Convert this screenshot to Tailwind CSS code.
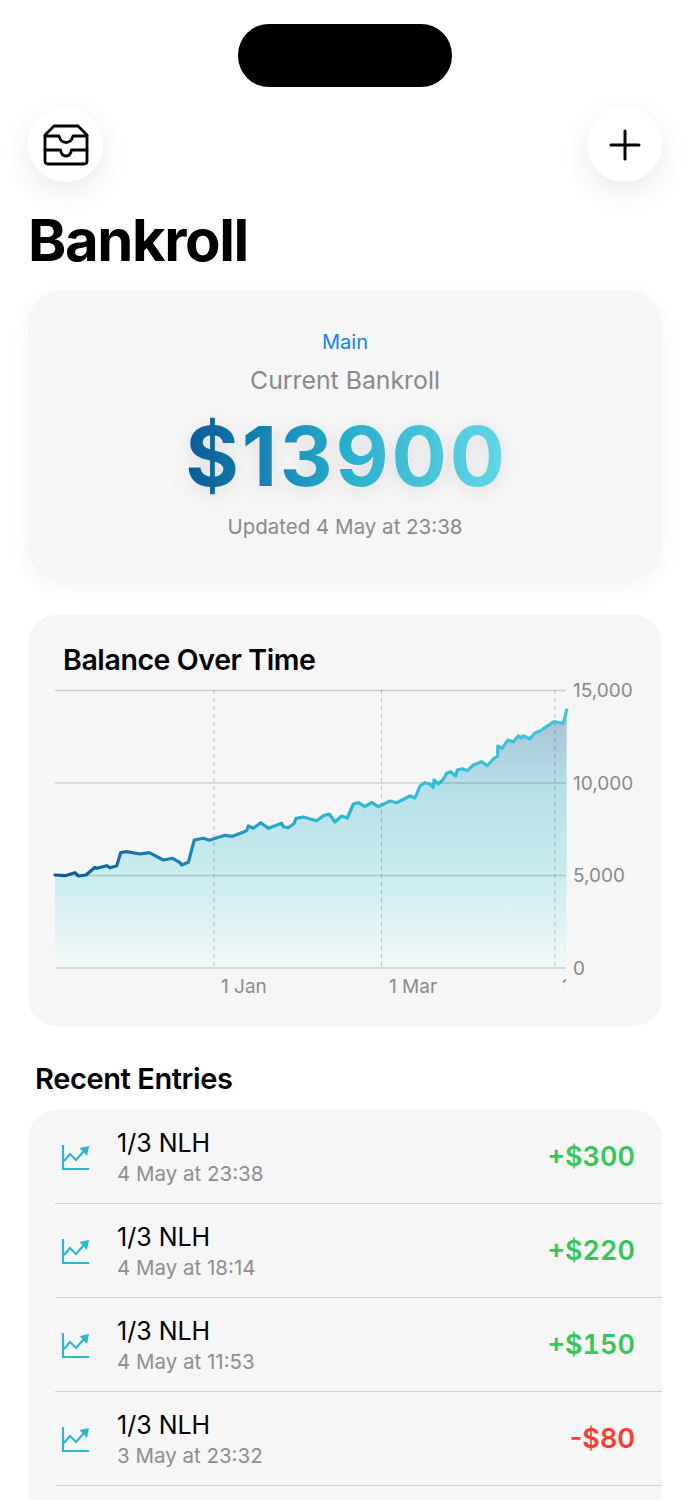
<!DOCTYPE html>
<html lang="en">

<head>
    <meta charset="UTF-8" />
    <meta name="viewport" content="width=device-width, initial-scale=1" />
    <title>Bankroll</title>
    <script src="https://cdn.jsdelivr.net/npm/@tailwindcss/browser@4"></script>
</head>

<body class="bg-white text-black font-['Inter',sans-serif]">
    <div class="w-[689px] h-[1500px] overflow-hidden pt-6">
        <div class="mx-auto w-[214px] h-[63px] rounded-[31px] bg-black"></div>

        <div class="flex justify-between pl-7 pr-[27px] mt-5">
            <button class="w-[75px] h-[75px] rounded-full bg-white flex items-center justify-center shadow-[0_10px_30px_rgba(0,0,0,0.09)]">
                <svg width="46" height="42" viewBox="0 0 46 42" fill="none" stroke="#000" stroke-width="2.800" stroke-linejoin="round" stroke-linecap="round">
                    <path d="M2 11 L11 2 H35 L44 11 V37 Q44 40 41 40 H5 Q2 40 2 37 Z" />
                    <path d="M2 12 H16 C17 16 19 18.500 23 18.500 C27 18.500 29 16 30 12 H44" />
                    <path d="M2 26 H17.500 C18 29.500 20 32 23 32 C26 32 28 29.500 28.500 26 H44" />
                </svg>
            </button>
            <button class="w-[75px] h-[75px] rounded-full bg-white flex items-center justify-center shadow-[0_10px_30px_rgba(0,0,0,0.09)]">
                <svg width="32" height="32" viewBox="0 0 32 32" fill="none" stroke="#000" stroke-width="3" stroke-linecap="round">
                    <path d="M16 2 V30 M2 16 H30" />
                </svg>
            </button>
        </div>

        <h1 class="px-7 mt-[25px] text-[58px] leading-[67px] font-bold tracking-[-1.4px]">Bankroll</h1>

        <div class="ml-7 mr-[27px] mt-[16px] h-[290px] rounded-[36px] bg-[#f6f6f6] shadow-[0_6px_22px_rgba(0,0,0,0.05)] flex flex-col items-center pt-[38px]">
            <div class="text-[20px] leading-7 text-[#0a84ff]">Main</div>
            <div class="mt-[10px] text-[24.800px] leading-[29px] text-[#8a8a8e]">Current Bankroll</div>
            <div class="mt-[16px] pl-[3px] text-[82px] leading-[92px] font-bold tracking-[2.800px] bg-linear-to-r from-[#0b5896] via-[#27afcc] to-[#63d9e8] bg-clip-text text-transparent drop-shadow-[0_4px_10px_rgba(0,0,0,0.1)]">$13900</div>
            <div class="mt-[10px] text-[20.500px] leading-7 text-[#8a8a8e]">Updated 4 May at 23:38</div>
        </div>

        <div class="ml-7 mr-[27px] mt-[35px] h-[411px] rounded-[28px] bg-[#f6f6f6] overflow-hidden">
            <h2 class="pl-[35px] pt-[27px] text-[28.500px] leading-[36px] font-semibold tracking-[-0.4px]">Balance Over Time</h2>
            <svg class="block mt-[-8px]" width="634" height="356" viewBox="28 670 634 356" font-size="19" fill="#8a8a8e">
                <defs>
                    <linearGradient id="lineFill" gradientUnits="userSpaceOnUse" x1="55" y1="0" x2="566" y2="0">
                        <stop offset="0" stop-color="#0b5896" />
                        <stop offset="0.5" stop-color="#28b4d2" />
                        <stop offset="1" stop-color="#41c6de" />
                    </linearGradient>
                    <linearGradient id="areaFill" gradientUnits="userSpaceOnUse" x1="0" y1="710" x2="0" y2="968">
                        <stop offset="0" stop-color="#a6bfd1" />
                        <stop offset="0.28" stop-color="#b4dee7" />
                        <stop offset="0.64" stop-color="#c9edf0" />
                        <stop offset="1" stop-color="#f3f7f7" />
                    </linearGradient>
                    <clipPath id="edge">
                        <rect x="555" y="970" width="11" height="30" />
                    </clipPath>
                </defs>

                <polygon fill="url(#areaFill)" points="55,968 55,875 65,875.700 75,872.700 78.300,876 86,875 95,867.300 96.700,868.300 106.700,865.700 110,867.700 116.700,865.700 120.700,852.700 126.700,851.700 140,854 149.300,852.700 163.300,860 172.700,858.300 180,862.700 181.700,865 188.300,862.300 194.300,840 203.300,838.300 209.300,840.300 225,835.300 232.700,836.300 246.700,830.700 248.300,826 253.300,828.300 260.700,822.700 268.300,828.300 281.700,823.300 283.300,826.700 288.300,827.700 294.300,823.300 296,818.300 303.300,817 316.700,820.700 323.300,815.700 329.300,814 335,822 341.700,816 347.300,818 353.300,804 358.300,802.700 365,806.700 371.700,802.300 378.300,806.700 390,801 396.700,802.700 410,796 415,798 420,786 425,782.700 430,784 433.300,787.300 434,780 438.300,784 443.300,779.300 446.700,773.300 450.700,771.700 455.700,776 457.300,770 462.300,768.700 467.300,770.700 473.300,765 481.700,761.700 487.300,765.700 494,758.300 497.700,756 497.700,746 502.300,748.300 507.700,740 513.300,741.700 518.300,736 521.700,738 523.300,735.700 530,738.700 535,732.700 540,731 554,721.700 563.300,723.300 566.700,710 566.700,968" />

                <g stroke="#000" stroke-opacity="0.16" stroke-width="1.500">
                    <path d="M55 690.500 H566 M55 783 H566 M55 875.500 H566 M55 968 H566" />
                </g>
                <g stroke="#000" stroke-opacity="0.22" stroke-width="1" stroke-dasharray="4 4">
                    <path d="M214 690 V968 M381.500 690 V968 M555 690 V968" />
                </g>

                <polyline fill="none" stroke="url(#lineFill)" stroke-width="3.200" stroke-linejoin="round" stroke-linecap="round" points="55,875 65,875.700 75,872.700 78.300,876 86,875 95,867.300 96.700,868.300 106.700,865.700 110,867.700 116.700,865.700 120.700,852.700 126.700,851.700 140,854 149.300,852.700 163.300,860 172.700,858.300 180,862.700 181.700,865 188.300,862.300 194.300,840 203.300,838.300 209.300,840.300 225,835.300 232.700,836.300 246.700,830.700 248.300,826 253.300,828.300 260.700,822.700 268.300,828.300 281.700,823.300 283.300,826.700 288.300,827.700 294.300,823.300 296,818.300 303.300,817 316.700,820.700 323.300,815.700 329.300,814 335,822 341.700,816 347.300,818 353.300,804 358.300,802.700 365,806.700 371.700,802.300 378.300,806.700 390,801 396.700,802.700 410,796 415,798 420,786 425,782.700 430,784 433.300,787.300 434,780 438.300,784 443.300,779.300 446.700,773.300 450.700,771.700 455.700,776 457.300,770 462.300,768.700 467.300,770.700 473.300,765 481.700,761.700 487.300,765.700 494,758.300 497.700,756 497.700,746 502.300,748.300 507.700,740 513.300,741.700 518.300,736 521.700,738 523.300,735.700 530,738.700 535,732.700 540,731 554,721.700 563.300,723.300 566.700,710" />

                <text x="573" y="697">15,000</text>
                <text x="573" y="790">10,000</text>
                <text x="573" y="882">5,000</text>
                <text x="573" y="975">0</text>
                <text x="221" y="993">1 Jan</text>
                <text x="389" y="993">1 Mar</text>
                <text x="562" y="993" clip-path="url(#edge)">1</text>
            </svg>
        </div>

        <h2 class="pl-[35px] mt-[35px] text-[29px] leading-[36px] font-semibold tracking-[-0.4px]">Recent Entries</h2>

        <div class="ml-7 mr-[27px] mt-[13px] rounded-t-[28px] bg-[#f6f6f6]">
            <div class="h-[93px] flex items-center pl-[33px] pr-[27px]">
                <svg width="30" height="28" viewBox="0 0 30 28" fill="none" class="shrink-0">
                    <path d="M2 2 V26 H28" stroke="#2db6d4" stroke-width="2.200" />
                    <path d="M3 18 L9 11 L15 17 L23 8" stroke="#2db6d4" stroke-width="2.200" />
                    <path d="M28 3 L18.500 5 L26 13 Z" fill="#2db6d4" />
                </svg>
                <div class="ml-[26px] pt-[3px]">
                    <div class="text-[25px] leading-[31px]">1/3 NLH</div>
                    <div class="text-[20.500px] leading-[29px] text-[#8e8e93]">4 May at 23:38</div>
                </div>
                <div class="ml-auto pt-[1px] text-[27px] font-semibold tabular-nums text-[#34c759]">+$300</div>
            </div>
            <div class="h-px ml-[27px] bg-[#d2d2d2]"></div>
            <div class="h-[93px] flex items-center pl-[33px] pr-[27px]">
                <svg width="30" height="28" viewBox="0 0 30 28" fill="none" class="shrink-0">
                    <path d="M2 2 V26 H28" stroke="#2db6d4" stroke-width="2.200" />
                    <path d="M3 18 L9 11 L15 17 L23 8" stroke="#2db6d4" stroke-width="2.200" />
                    <path d="M28 3 L18.500 5 L26 13 Z" fill="#2db6d4" />
                </svg>
                <div class="ml-[26px] pt-[3px]">
                    <div class="text-[25px] leading-[31px]">1/3 NLH</div>
                    <div class="text-[20.500px] leading-[29px] text-[#8e8e93]">4 May at 18:14</div>
                </div>
                <div class="ml-auto pt-[1px] text-[27px] font-semibold tabular-nums text-[#34c759]">+$220</div>
            </div>
            <div class="h-px ml-[27px] bg-[#d2d2d2]"></div>
            <div class="h-[93px] flex items-center pl-[33px] pr-[27px]">
                <svg width="30" height="28" viewBox="0 0 30 28" fill="none" class="shrink-0">
                    <path d="M2 2 V26 H28" stroke="#2db6d4" stroke-width="2.200" />
                    <path d="M3 18 L9 11 L15 17 L23 8" stroke="#2db6d4" stroke-width="2.200" />
                    <path d="M28 3 L18.500 5 L26 13 Z" fill="#2db6d4" />
                </svg>
                <div class="ml-[26px] pt-[3px]">
                    <div class="text-[25px] leading-[31px]">1/3 NLH</div>
                    <div class="text-[20.500px] leading-[29px] text-[#8e8e93]">4 May at 11:53</div>
                </div>
                <div class="ml-auto pt-[1px] text-[27px] font-semibold tabular-nums text-[#34c759]">+$150</div>
            </div>
            <div class="h-px ml-[27px] bg-[#d2d2d2]"></div>
            <div class="h-[93px] flex items-center pl-[33px] pr-[27px]">
                <svg width="30" height="28" viewBox="0 0 30 28" fill="none" class="shrink-0">
                    <path d="M2 2 V26 H28" stroke="#2db6d4" stroke-width="2.200" />
                    <path d="M3 18 L9 11 L15 17 L23 8" stroke="#2db6d4" stroke-width="2.200" />
                    <path d="M28 3 L18.500 5 L26 13 Z" fill="#2db6d4" />
                </svg>
                <div class="ml-[26px] pt-[3px]">
                    <div class="text-[25px] leading-[31px]">1/3 NLH</div>
                    <div class="text-[20.500px] leading-[29px] text-[#8e8e93]">3 May at 23:32</div>
                </div>
                <div class="ml-auto pt-[1px] text-[27px] font-semibold text-[#ff3b30]">-$80</div>
            </div>
            <div class="h-px ml-[27px] bg-[#d2d2d2]"></div>
            <div class="h-[60px]"></div>
        </div>
    </div>
</body>

</html>
